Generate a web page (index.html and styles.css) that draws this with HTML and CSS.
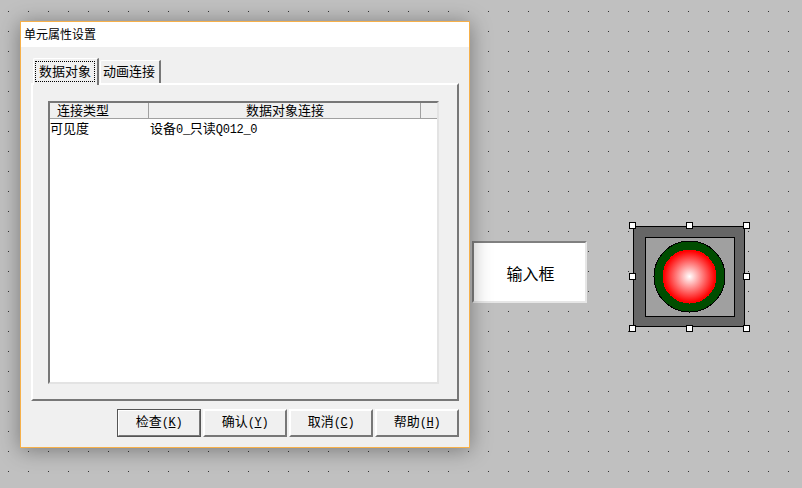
FILE: index.html
```html
<!DOCTYPE html>
<html lang="zh">
<head>
  <meta charset="utf-8">
  <title>单元属性设置</title>
  <link rel="stylesheet" href="styles.css">
</head>
<body>
  <!-- canvas items: input box and indicator sit under the dialog's shadow -->
  <div class="inputbox">输入框</div>

  <svg class="lamp" width="121" height="110" viewBox="0 0 121 110">
    <defs>
      <radialGradient id="glow">
        <stop offset="0" stop-color="#fff"/>
        <stop offset="0.95" stop-color="#f00"/>
        <stop offset="1" stop-color="#f00"/>
      </radialGradient>
    </defs>
    <rect class="frame" x="4.5" y="4.5" width="111" height="100"/>
    <rect class="plate" x="16.5" y="15.5" width="89" height="79"/>
    <circle class="ring" cx="60.5" cy="54.5" r="35.5"/>
    <circle class="bulb" cx="60.5" cy="54.5" r="27" fill="url(#glow)"/>
    <rect class="handle" x="0.5" y="0.5" width="6" height="6"/>
    <rect class="handle" x="57.5" y="0.5" width="6" height="6"/>
    <rect class="handle" x="114.5" y="0.5" width="6" height="6"/>
    <rect class="handle" x="0.5" y="51.5" width="6" height="6"/>
    <rect class="handle" x="114.5" y="51.5" width="6" height="6"/>
    <rect class="handle" x="0.5" y="103.5" width="6" height="6"/>
    <rect class="handle" x="57.5" y="103.5" width="6" height="6"/>
    <rect class="handle" x="114.5" y="103.5" width="6" height="6"/>
  </svg>

  <div class="dialog">
    <div class="titlebar">单元属性设置</div>
    <div class="dialog-body">
      <div class="tabs">
        <div class="tab tab-active"><span class="focus">数据对象</span></div>
        <div class="tab">动画连接</div>
      </div>
      <div class="panel">
        <div class="list">
          <div class="list-head">
            <div class="col-type">连接类型</div>
            <div class="col-conn">数据对象连接</div>
            <div class="col-rest"></div>
          </div>
          <div class="list-row">
            <div class="cell-type">可见度</div>
            <div class="cell-conn">设备<span class="lat">0_</span>只读<span class="lat">Q012_0</span></div>
          </div>
        </div>
      </div>
      <div class="buttons">
        <div class="btn btn-default">检查<span class="lat">(<u>K</u>)</span></div>
        <div class="btn">确认<span class="lat">(<u>Y</u>)</span></div>
        <div class="btn">取消<span class="lat">(<u>C</u>)</span></div>
        <div class="btn">帮助<span class="lat">(<u>H</u>)</span></div>
      </div>
    </div>
  </div>
</body>
</html>
```

FILE: styles.css
```css
html, body {
  margin: 0;
  height: 100%;
}

body {
  position: relative;
  overflow: hidden;
  background-color: #c0c0c0;
  /* one pixel dot every 20px */
  background-image: radial-gradient(circle at 0.5px 0.5px, #333 0.5px, transparent 0.5px);
  background-size: 20px 20px;
  background-position: 8px 11px;
  font: 13px "Noto Sans CJK SC", sans-serif;
  color: #000;
}

.lat {
  font-family: "Liberation Mono", monospace;
  font-size: 12px;
  letter-spacing: -0.3px;
}

/* dialog */
.dialog {
  position: absolute;
  left: 20px;
  top: 21px;
  width: 450px;
  height: 427px;
  box-sizing: border-box;
  border: 1px solid #f6b04a;
  box-shadow: 0 2px 20px rgba(0, 0, 0, 0.38);
  display: flex;
  flex-direction: column;
  background: #f0f0f0;
}

.titlebar {
  height: 25px;
  background: #fff;
  padding-left: 3px;
  font-size: 12px;
  line-height: 24px;
}

.dialog-body {
  flex: 1;
  padding: 11px 0 0 10px;
  display: flex;
  flex-direction: column;
}

/* tabs */
.tabs {
  height: 25px;
  display: flex;
  align-items: flex-end;
  padding-left: 2px;
}

.tab {
  height: 23px;
  box-sizing: border-box;
  width: 61px;
  margin-left: 1px;
  padding-right: 2px;
  border-top: 1px solid #fff;
  border-left: 1px solid #fff;
  border-right: 2px solid #777;
  border-top-left-radius: 2px;
  text-align: center;
  line-height: 20px;
}

/* selected tab hides the panel's top edge below it */
.tab-active {
  position: relative;
  width: 66px;
  height: 27px;
  margin: 0 0 -2px;
  padding: 2px 0 0 1px;
  background: #f0f0f0;
}

.focus {
  display: block;
  width: 60px;
  height: 21px;
  line-height: 17px;
  box-sizing: border-box;
  border: 1px dotted #000;
}

.panel {
  width: 428px;
  height: 318px;
  box-sizing: border-box;
  border-top: 2px solid #fff;
  border-left: 2px solid #fff;
  border-right: 2px solid #777;
  border-bottom: 2px solid #777;
  padding: 16px 18px 15px 15px;
}

/* list view */
.list {
  height: 100%;
  box-sizing: border-box;
  background: #fff;
  border-top: 2px solid #777;
  border-left: 2px solid #777;
  border-right: 2px solid #e3e3e3;
  border-bottom: 2px solid #e3e3e3;
}

.list-head {
  display: flex;
  height: 16px;
  box-sizing: border-box;
  background: #f0f0f0;
  border-bottom: 1px solid #a0a0a0;
  line-height: 13px;
}

.col-type {
  flex: none;
  width: 91px;
  padding-left: 7px;
  border-right: 1px solid #a0a0a0;
}

.col-conn {
  flex: none;
  width: 271px;
  box-sizing: border-box;
  text-align: center;
  border-right: 1px solid #a0a0a0;
  margin-left: 1px;
}

.col-rest {
  flex: 1;
}

.list-row {
  display: flex;
  height: 20px;
  line-height: 17px;
}

.cell-type {
  width: 100px;
}

/* buttons */
.buttons {
  display: flex;
  justify-content: flex-end;
  gap: 2px;
  margin-top: 8px;
  width: 428px;
}

.btn {
  width: 84px;
  height: 28px;
  box-sizing: border-box;
  border-top: 2px solid #fff;
  border-left: 2px solid #fff;
  border-right: 2px solid #777;
  border-bottom: 2px solid #777;
  text-align: center;
  line-height: 19px;
}

.btn-default {
  outline: 1px solid #555;
  outline-offset: -1px;
}

/* canvas items */
.inputbox {
  position: absolute;
  left: 472px;
  top: 241px;
  width: 115px;
  height: 62px;
  box-sizing: border-box;
  padding: 2px 0 0 2px;
  background: #fff;
  border-top: 2px solid #808080;
  border-left: 2px solid #808080;
  border-right: 2px solid #e6e6e6;
  border-bottom: 2px solid #e6e6e6;
  font-size: 16px;
  display: flex;
  align-items: center;
  justify-content: center;
}

.lamp {
  position: absolute;
  left: 629px;
  top: 222px;
}

.frame {
  fill: #666;
  stroke: #000;
  shape-rendering: crispEdges;
}

.plate {
  fill: #a0a0a0;
  stroke: #000;
  shape-rendering: crispEdges;
}

.ring {
  fill: #004d00;
  stroke: #000;
  shape-rendering: crispEdges;
}

.bulb {
  shape-rendering: crispEdges;
}

.handle {
  fill: #fff;
  stroke: #000;
  shape-rendering: crispEdges;
}
```
